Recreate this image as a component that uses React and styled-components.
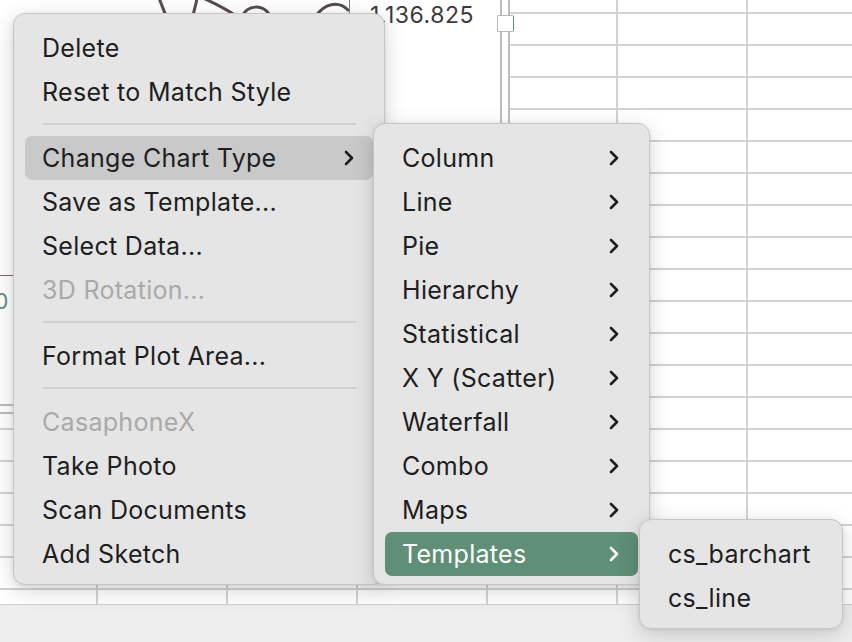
import React from 'react';
import styled, { createGlobalStyle } from 'styled-components';

const GlobalStyle = createGlobalStyle`
  html, body {
    margin: 0;
    padding: 0;
    background: #ffffff;
  }
  body {
    font-family: Inter, "Liberation Sans", sans-serif;
    -webkit-font-smoothing: antialiased;
  }
`;

const mainItems = [
  { label: 'Delete' },
  { label: 'Reset to Match Style' },
  { sep: true },
  { label: 'Change Chart Type', sub: true, active: 'gray' },
  { label: 'Save as Template...' },
  { label: 'Select Data...' },
  { label: '3D Rotation...', disabled: true },
  { sep: true },
  { label: 'Format Plot Area...' },
  { sep: true },
  { label: 'CasaphoneX', disabled: true },
  { label: 'Take Photo' },
  { label: 'Scan Documents' },
  { label: 'Add Sketch' },
];

const chartTypes = [
  'Column',
  'Line',
  'Pie',
  'Hierarchy',
  'Statistical',
  'X Y (Scatter)',
  'Waterfall',
  'Combo',
  'Maps',
];

const templates = ['cs_barchart', 'cs_line'];

const Chevron = ({ light }) => (
  <svg width='10' height='16' viewBox='0 0 10 16'>
    <path
      d='M2 2 L8 8 L2 14'
      fill='none'
      stroke={light ? '#ffffff' : '#1e1e1e'}
      strokeWidth='2.6'
      strokeLinecap='round'
      strokeLinejoin='round'
    />
  </svg>
);

const MenuList = ({ items, ...rest }) => (
  <Menu {...rest}>
    {items.map((it, i) =>
      it.sep ? (
        <Separator key={i} />
      ) : (
        <Item key={i} $active={it.active} $disabled={it.disabled}>
          <span>{it.label}</span>
          {it.sub && <Chevron light={it.active === 'green'} />}
        </Item>
      )
    )}
  </Menu>
);

const App = () => {
  const subItems = [
    ...chartTypes.map((label) => ({ label, sub: true })),
    { label: 'Templates', sub: true, active: 'green' },
  ];

  return (
    <>
      <GlobalStyle />
      <Sheet>
        <Grid />
        <StatusStrip />

        <Chart>
          <ValueLabel>1.136.825</ValueLabel>
          <ZeroLabel>0</ZeroLabel>
        </Chart>
        <Handle />

        <Plot width='852' height='642' viewBox='0 0 852 642'>
          <g fill='none' stroke='#574b4b' strokeWidth='3' strokeLinecap='round'>
            <path d='M159 -2 L166 16' />
            <path d='M197 -2 C196 5 194 10 193 16' />
            <path d='M203 -2 C214 3 225 8 236 16' />
            <path d='M242 16 C248 5 262 4 269 14' />
            <path d='M316 16 C324 4 338 0 348 10' />
          </g>
          <line x1='349.5' y1='0' x2='349.5' y2='14' stroke='#5e8f75' strokeWidth='1' />
          <line x1='0' y1='275.5' x2='14' y2='275.5' stroke='#7d6b6b' strokeWidth='1' />
        </Plot>

        <MenuList items={mainItems} $left={13} $top={13} $width={372} $z={1} />
        <MenuList items={subItems} $left={373} $top={123} $width={277} $z={2} />
        <MenuList
          items={templates.map((label) => ({ label }))}
          $left={639}
          $top={519}
          $width={204}
          $z={3}
        />
      </Sheet>
    </>
  );
};

export default App;

const Sheet = styled.div`
  position: relative;
  width: 852px;
  height: 642px;
  overflow: hidden;
  display: flex;
  flex-direction: column;
  background: #ffffff;
`;

const Grid = styled.div`
  height: 604px;
  flex: none;
  background-color: #ffffff;
  background-image: linear-gradient(to right, #d3d3d3 2px, transparent 2px),
    linear-gradient(to bottom, #d3d3d3 2px, transparent 2px);
  background-size: 130px 100%, 100% 32px;
  background-position: 96px 0, 0 12px;
`;

const StatusStrip = styled.div`
  flex: 1;
  background: #eeeeee;
  border-top: 1px solid #d0d0d0;
`;

const Chart = styled.div`
  position: absolute;
  left: -20px;
  top: -20px;
  width: 530px;
  height: 434px;
  box-sizing: border-box;
  background: #ffffff;
  border: 2px solid #bdbdbd;
  box-shadow: inset 0 0 0 6px #ffffff, inset 0 0 0 8px #bdbdbd;
`;

const ValueLabel = styled.div`
  position: absolute;
  left: 388px;
  top: 19px;
  font-size: 23px;
  line-height: 28px;
  color: #3b3b3b;
  letter-spacing: 0.5px;
`;

const ZeroLabel = styled.div`
  position: absolute;
  left: 13px;
  top: 306px;
  font-size: 21px;
  line-height: 28px;
  color: #5d8d73;
`;

const Handle = styled.div`
  position: absolute;
  left: 497px;
  top: 15px;
  width: 15px;
  height: 15px;
  background: #ffffff;
  border: 1px solid #b8b8b8;
  border-right: 1px solid #5e8f75;
  border-radius: 2px;
`;

const Plot = styled.svg`
  position: absolute;
  left: 0;
  top: 0;
  pointer-events: none;
`;

const Menu = styled.div`
  position: absolute;
  left: ${(p) => p.$left}px;
  top: ${(p) => p.$top}px;
  width: ${(p) => p.$width}px;
  z-index: ${(p) => p.$z};
  box-sizing: border-box;
  padding: 12px 11px 8px 11px;
  display: flex;
  flex-direction: column;
  background: #e5e5e5;
  border: 1px solid #c6c6c6;
  border-radius: 12px;
  box-shadow: 0 6px 22px rgba(0, 0, 0, 0.16), 0 1px 4px rgba(0, 0, 0, 0.08);
`;

const Item = styled.div`
  height: 44px;
  flex: none;
  display: flex;
  align-items: center;
  justify-content: space-between;
  padding: 0 19px 0 17px;
  border-radius: 7px;
  font-size: 25px;
  letter-spacing: 0.3px;
  white-space: nowrap;
  color: ${(p) =>
    p.$disabled ? '#a9a9a9' : p.$active === 'green' ? '#ffffff' : '#1e1e1e'};
  background: ${(p) =>
    p.$active === 'green' ? '#5f8f76' : p.$active === 'gray' ? '#c9c9c9' : 'transparent'};
`;

const Separator = styled.div`
  height: 2px;
  flex: none;
  margin: 9px 17px 11px 18px;
  background: #d0d0d0;
`;
